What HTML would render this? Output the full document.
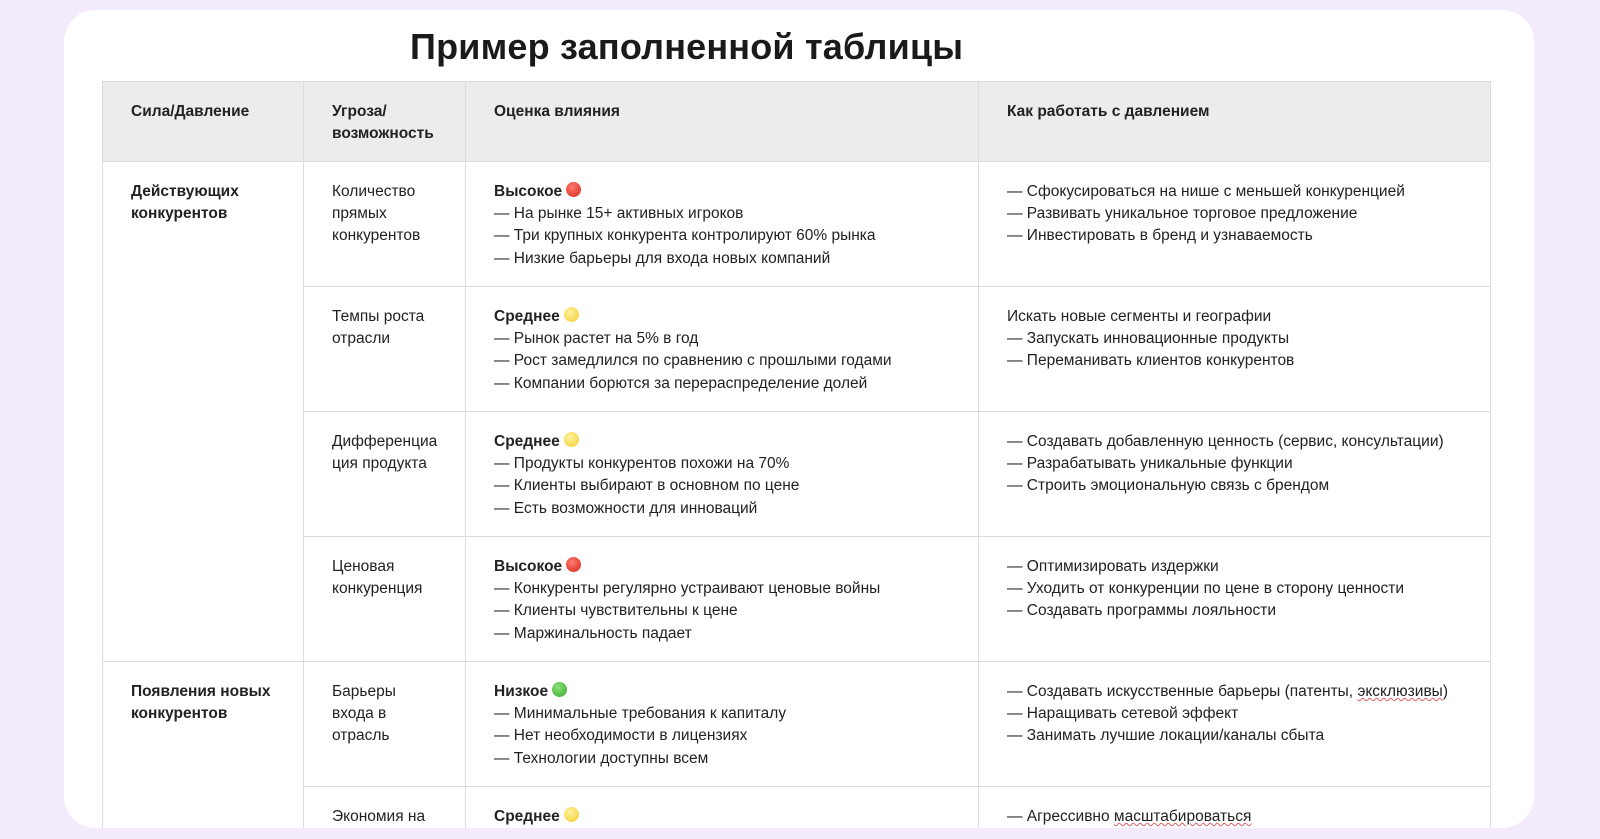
<!DOCTYPE html>
<html><head><meta charset="utf-8"><style>
html,body{margin:0;padding:0;}
body{width:1600px;height:839px;background:#f3ebfc;overflow:hidden;font-family:"Liberation Sans","Noto Sans CJK SC",sans-serif;color:#222;}
.card{position:absolute;left:64px;top:10px;width:1470px;height:818px;background:#fff;border-radius:32px;overflow:hidden;}
h1{position:absolute;left:346px;top:16px;margin:0;font-size:36px;font-weight:bold;color:#1a1a1a;letter-spacing:0.2px;}
table{position:absolute;left:38px;top:71px;border-collapse:collapse;table-layout:fixed;width:1388px;font-size:15.5px;line-height:22.2px;}
td,th{border:1px solid #dcdcdc;vertical-align:top;padding:19px 14px 0 28px;text-align:left;box-sizing:border-box;}
th{background:#ececec;height:80px;font-weight:bold;}
td{height:125px;}
b{font-weight:bold;}
.d{display:inline-block;width:15px;height:15px;border-radius:50%;vertical-align:-1px;margin-left:4px;}
.r{background:radial-gradient(circle at 40% 35%,#ff7a6e,#d3271c);}
.y{background:radial-gradient(circle at 40% 35%,#fff2a0,#f5cb2a);}
.g{background:radial-gradient(circle at 40% 35%,#8be27a,#37a52a);}
.u{text-decoration:underline wavy #e06060;text-decoration-thickness:1px;}
</style></head><body>
<div class="card">
<h1>Пример заполненной таблицы</h1>
<table>
<colgroup><col style="width:201px"><col style="width:162px"><col style="width:513px"><col style="width:512px"></colgroup>
<tr><th>Сила/Давление</th><th>Угроза/<br>возможность</th><th>Оценка влияния</th><th>Как работать с давлением</th></tr>
<tr><td rowspan="4"><b>Действующих<br>конкурентов</b></td><td>Количество<br>прямых<br>конкурентов</td><td><b>Высокое</b><span class="d r"></span><br>— На рынке 15+ активных игроков<br>— Три крупных конкурента контролируют 60% рынка<br>— Низкие барьеры для входа новых компаний</td><td>— Сфокусироваться на нише с меньшей конкуренцией<br>— Развивать уникальное торговое предложение<br>— Инвестировать в бренд и узнаваемость</td></tr>
<tr><td>Темпы роста<br>отрасли</td><td><b>Среднее</b><span class="d y"></span><br>— Рынок растет на 5% в год<br>— Рост замедлился по сравнению с прошлыми годами<br>— Компании борются за перераспределение долей</td><td>Искать новые сегменты и географии<br>— Запускать инновационные продукты<br>— Переманивать клиентов конкурентов</td></tr>
<tr><td>Дифференциа<br>ция продукта</td><td><b>Среднее</b><span class="d y"></span><br>— Продукты конкурентов похожи на 70%<br>— Клиенты выбирают в основном по цене<br>— Есть возможности для инноваций</td><td>— Создавать добавленную ценность (сервис, консультации)<br>— Разрабатывать уникальные функции<br>— Строить эмоциональную связь с брендом</td></tr>
<tr><td>Ценовая<br>конкуренция</td><td><b>Высокое</b><span class="d r"></span><br>— Конкуренты регулярно устраивают ценовые войны<br>— Клиенты чувствительны к цене<br>— Маржинальность падает</td><td>— Оптимизировать издержки<br>— Уходить от конкуренции по цене в сторону ценности<br>— Создавать программы лояльности</td></tr>
<tr><td rowspan="2"><b>Появления новых<br>конкурентов</b></td><td>Барьеры<br>входа в<br>отрасль</td><td><b>Низкое</b><span class="d g"></span><br>— Минимальные требования к капиталу<br>— Нет необходимости в лицензиях<br>— Технологии доступны всем</td><td>— Создавать искусственные барьеры (патенты, <span class="u">эксклюзивы</span>)<br>— Наращивать сетевой эффект<br>— Занимать лучшие локации/каналы сбыта</td></tr>
<tr><td>Экономия на<br>масштабе</td><td><b>Среднее</b><span class="d y"></span><br>— Крупные игроки имеют преимущество</td><td>— Агрессивно <span class="u">масштабироваться</span></td></tr>
</table>
</div>
</body></html>
